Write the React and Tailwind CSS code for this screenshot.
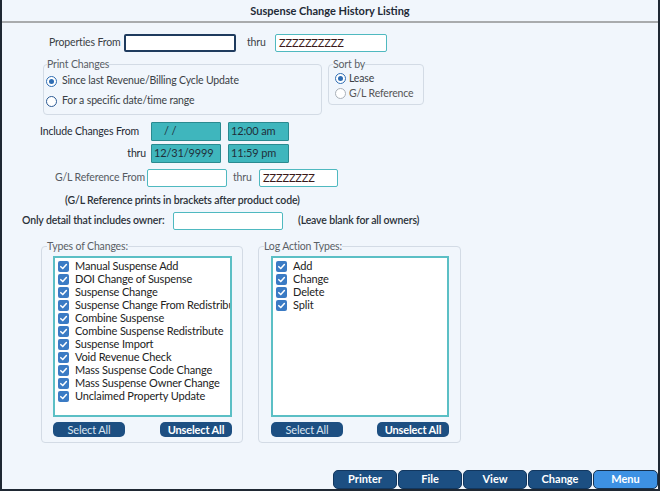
import React from 'react'

const FONT = { fontFamily: 'Lato, "Open Sans", sans-serif' }

const TYPES = [
  'Manual Suspense Add',
  'DOI Change of Suspense',
  'Suspense Change',
  'Suspense Change From Redistribute',
  'Combine Suspense',
  'Combine Suspense Redistribute',
  'Suspense Import',
  'Void Revenue Check',
  'Mass Suspense Code Change',
  'Mass Suspense Owner Change',
  'Unclaimed Property Update',
]

const ACTIONS = ['Add', 'Change', 'Delete', 'Split']

function Check() {
  return (
    <span className="w-[11px] h-[11px] shrink-0 rounded-[2px] bg-[#3b7bc4] flex items-center justify-center">
      <svg width="9" height="9" viewBox="0 0 10 10">
        <path d="M2 5.2 L4.2 7.3 L8.2 2.8" fill="none" stroke="white" strokeWidth="1.7" strokeLinecap="round" strokeLinejoin="round" />
      </svg>
    </span>
  )
}

function Radio({ on, dim }) {
  const ring = on ? 'border-[#2f6db3]' : dim ? 'border-[#a9b0b8]' : 'border-[#2c5a94]'
  return (
    <span className={`w-[11px] h-[11px] shrink-0 rounded-full border-[1.5px] bg-white flex items-center justify-center ${ring}`}>
      {on && <span className="w-[5px] h-[5px] rounded-full bg-[#2f6db3]" />}
    </span>
  )
}

function TextBox({ w, value, navy }) {
  return (
    <div
      className={`h-[18px] shrink-0 bg-white rounded-[2px] flex items-center pl-[3px] text-[11px] text-[#3a1818] ${navy ? 'border-2 border-[#1f3b5e]' : 'border-[1.5px] border-[#4fb9c0]'}`}
      style={{ width: w }}
    >
      {value}
    </div>
  )
}

function TealBox({ w, value, center }) {
  return (
    <div
      className={`h-[19px] shrink-0 bg-[#3fb6bd] border-[1.5px] border-[#2a8a90] rounded-[1px] flex items-center text-[11px] text-[#1f2f3a] ${center ? 'pl-[12px]' : 'pl-[2px]'}`}
      style={{ width: w }}
    >
      {value}
    </div>
  )
}

function ListGroup({ title, items, boxW, listW, ml, listMl }) {
  return (
    <fieldset
      className="h-[203px] shrink-0 border border-[#d3dbe5] rounded-[4px] flex flex-col"
      style={{ width: boxW, marginLeft: ml }}
    >
      <legend className="ml-[5px] text-[10.5px] leading-[13px] text-[#5a5f66]">{title}</legend>
      <div
        className="mt-[3px] h-[161px] shrink-0 bg-white border-2 border-[#5bbfc5] pt-[2px] pl-[3px] overflow-hidden"
        style={{ width: listW, marginLeft: listMl }}
      >
        {items.map(t => (
          <div key={t} className="h-[13px] flex items-center gap-[6px] whitespace-nowrap text-[11px] text-[#222]">
            <Check />
            <span>{t}</span>
          </div>
        ))}
      </div>
      <div className="mt-[5px] flex justify-between" style={{ width: listW, marginLeft: listMl }}>
        <button className="w-[72px] h-[15px] rounded-[5px] bg-[#1d4f82] text-[11px] leading-[15px] text-[#dbe6f2]">Select All</button>
        <button className="w-[72px] h-[15px] rounded-[5px] bg-[#1d4f82] text-[11px] leading-[15px] font-bold text-white">Unselect All</button>
      </div>
    </fieldset>
  )
}

export default function App() {
  return (
    <div
      className="w-[660px] h-[491px] overflow-hidden bg-[#f1f6fc] border-x-2 border-b-2 border-[#1f2833] flex flex-col text-[#3a3f45] whitespace-nowrap tracking-[-0.15px]"
      style={FONT}
    >
      <div className="h-[21px] shrink-0 leading-[21px] text-center text-[11px] font-bold text-[#1e2a36] tracking-normal">
        Suspense Change History Listing
      </div>
      <div className="h-[2px] shrink-0 bg-[#a9abad]" />

      {/* Properties range */}
      <div className="mt-[11px] shrink-0 flex items-center text-[10.5px]">
        <span className="ml-[47px] w-[75px]">Properties From</span>
        <TextBox w={112} navy />
        <span className="ml-[11px] w-[28px]">thru</span>
        <TextBox w={112} value="ZZZZZZZZZZ" />
      </div>

      {/* Print changes / sort by */}
      <div className="mt-[6px] shrink-0 flex items-start text-[10.5px]">
        <fieldset className="ml-[41px] w-[279px] h-[57px] border border-[#d3dbe5] rounded-[4px] flex flex-col">
          <legend className="ml-[3px] leading-[13px] text-[#5a5f66]">Print Changes</legend>
          <div className="h-[20px] pl-[2px] flex items-center gap-[5px]">
            <Radio on />
            <span>Since last Revenue/Billing Cycle Update</span>
          </div>
          <div className="h-[20px] pl-[2px] flex items-center gap-[5px]">
            <Radio />
            <span>For a specific date/time range</span>
          </div>
        </fieldset>
        <fieldset className="ml-[6px] w-[96px] h-[47px] border border-[#d3dbe5] rounded-[4px] flex flex-col">
          <legend className="ml-[4px] leading-[13px] text-[#5a5f66]">Sort by</legend>
          <div className="h-[15px] pl-[6px] flex items-center gap-[3px]">
            <Radio on />
            <span>Lease</span>
          </div>
          <div className="h-[15px] pl-[6px] flex items-center gap-[3px] text-[#555]">
            <Radio dim />
            <span>G/L Reference</span>
          </div>
        </fieldset>
      </div>

      {/* Date/time range */}
      <div className="mt-[7px] shrink-0 flex items-center text-[10.5px] text-[#1f2a33]">
        <span className="ml-[38px] w-[111px]">Include Changes From</span>
        <TealBox w={70} value="/  /" center />
        <span className="ml-[7px]" />
        <TealBox w={61} value="12:00 am" />
      </div>
      <div className="mt-[3px] shrink-0 flex items-center text-[10.5px] text-[#1f2a33]">
        <span className="ml-[38px] w-[111px] text-right pr-[5px]">thru</span>
        <TealBox w={70} value="12/31/9999" />
        <span className="ml-[7px]" />
        <TealBox w={61} value="11:59 pm" />
      </div>

      {/* G/L reference */}
      <div className="mt-[6px] shrink-0 flex items-center text-[10.5px] text-[#555b62]">
        <span className="ml-[53px] w-[92px]">G/L Reference From</span>
        <TextBox w={80} />
        <span className="ml-[6px] w-[26px]">thru</span>
        <TextBox w={79} value="ZZZZZZZZ" />
      </div>
      <div className="mt-[6px] shrink-0 h-[14px] leading-[14px] ml-[63px] text-[10.5px] font-semibold text-[#2b3138]">
        (G/L Reference prints in brackets after product code)
      </div>

      {/* Owner */}
      <div className="mt-[5px] shrink-0 flex items-center text-[10.5px] font-semibold text-[#2b3138]">
        <span className="ml-[20px] w-[151px]">Only detail that includes owner:</span>
        <TextBox w={110} />
        <span className="ml-[15px]">(Leave blank for all owners)</span>
      </div>

      {/* Lists */}
      <div className="mt-[10px] shrink-0 flex items-start">
        <ListGroup title="Types of Changes:" items={TYPES} boxW={202} listW={179} ml={39} listMl={11} />
        <ListGroup title="Log Action Types:" items={ACTIONS} boxW={203} listW={178} ml={15} listMl={12} />
      </div>

      {/* Bottom command bar */}
      <div className="mt-auto shrink-0 h-[19px] flex justify-end gap-[1px] tracking-normal">
        {['Printer', 'File', 'View', 'Change'].map(b => (
          <button key={b} className="w-[64px] h-[19px] rounded-[5px] bg-[#1c4f82] border border-[#12375f] text-[11px] font-bold text-white">
            {b}
          </button>
        ))}
        <button className="w-[65px] h-[19px] rounded-[5px] bg-[#3d91e3] border-[1.5px] border-[#17324f] text-[11px] font-bold text-white">
          Menu
        </button>
      </div>
    </div>
  )
}
